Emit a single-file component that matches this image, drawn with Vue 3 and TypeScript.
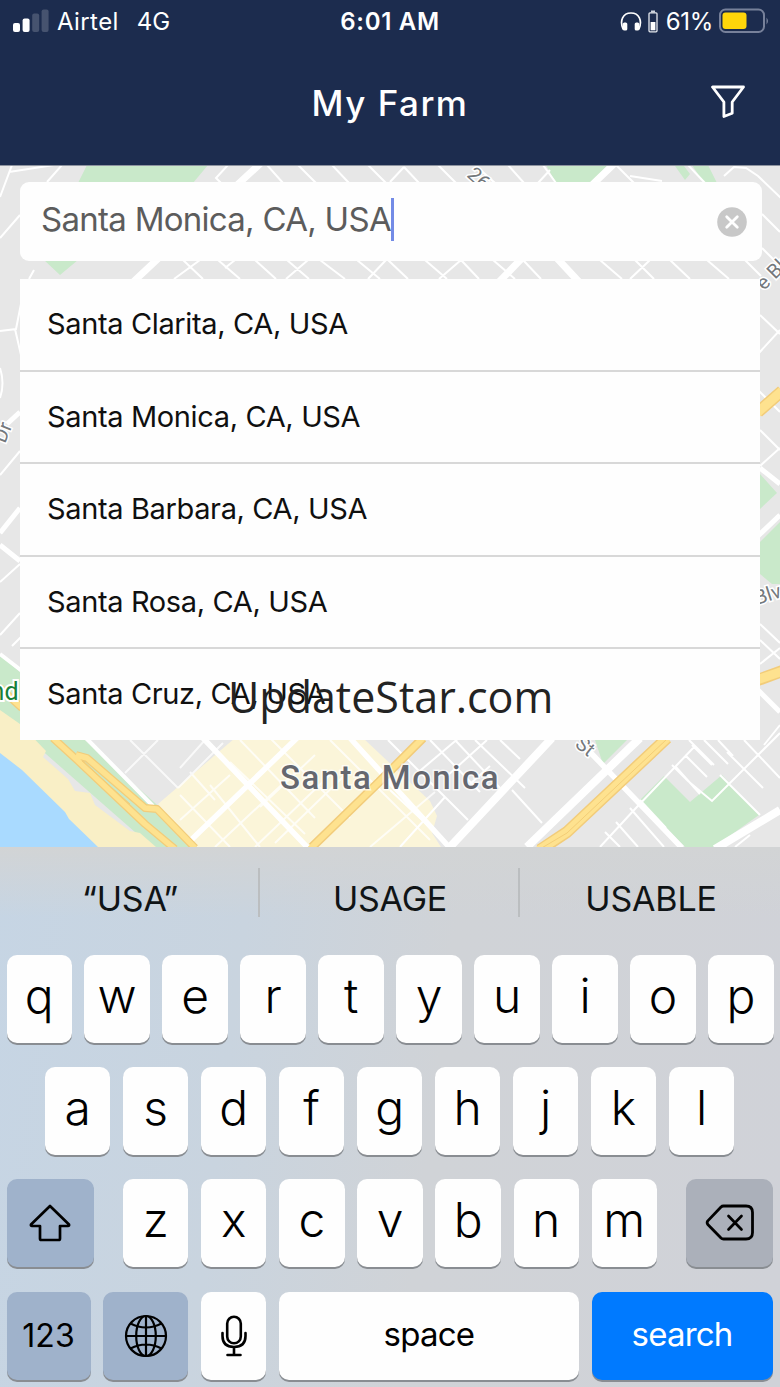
<template>
  <div class="screen">
    <header class="header">
      <div class="status-bar">
        <div class="status-left">
          <svg class="signal" width="36" height="24" viewBox="0 0 36 24">
            <rect x="0" y="14" width="7" height="9" rx="2" fill="#fff" />
            <rect x="9.6" y="9.5" width="7" height="13.5" rx="2" fill="#fff" />
            <rect x="19.2" y="4.5" width="7" height="18.5" rx="2" fill="#46536f" />
            <rect x="28.6" y="0.5" width="7" height="22.5" rx="2" fill="#46536f" />
          </svg>
          <span class="carrier">Airtel</span>
          <span class="network">4G</span>
        </div>
        <div class="clock">6:01 AM</div>
        <div class="status-right">
          <svg class="headphones" width="22" height="22" viewBox="0 0 22 22">
            <path d="M3.2 18.5C-.8 9.5 3 2 11 2s11.800 7.500 7.800 16.500" fill="none" stroke="#fff" stroke-width="1.700" />
            <rect x="2.800" y="11.500" width="4.500" height="8" rx="1.600" fill="#fff" />
            <rect x="14.700" y="11.500" width="4.500" height="8" rx="1.600" fill="#fff" />
          </svg>
          <svg class="mini-battery" width="10" height="23" viewBox="0 0 10 23">
            <rect x="3" y="0.500" width="4" height="2" fill="#cfd5df" />
            <rect x="1" y="2.800" width="8" height="19" rx="1" fill="none" stroke="#e6e9ee" stroke-width="1.300" />
            <rect x="2.600" y="12" width="4.800" height="8.300" fill="#fff" />
          </svg>
          <span class="percent">61%</span>
          <svg class="battery" width="50" height="26" viewBox="0 0 50 26">
            <rect x="1" y="1.500" width="44" height="22.500" rx="5.500" fill="none" stroke="#77819a" stroke-width="2" />
            <rect x="3.500" y="4.500" width="24" height="16.500" rx="3" fill="#ffd60a" />
            <path d="M47.500 9.500q3 3.500 0 7z" fill="#77819a" />
          </svg>
        </div>
      </div>
      <div class="title-bar">
        <h1>My Farm</h1>
        <svg class="filter" width="34" height="34" viewBox="0 0 34 34">
          <path d="M1.500 2h31L21.200 17v11.300L12.900 31.500V17z" fill="none" stroke="#fff" stroke-width="2.800" stroke-linejoin="round" />
        </svg>
      </div>
    </header>

    <main class="map-area">
      <svg class="map" width="780" height="681" viewBox="0 166 780 681">
        <rect y="165" width="780" height="682" fill="#e7e7e7" />

        <!-- parks -->
        <g fill="#c9e9ca">
          <path d="M87 165h121l-15 18H78zM44 260h34l-18 15zM546 165h65l-18 18h-37zM675 166l10 14 5-6-6-8zM692 165h16l9 18h-13z" />
          <path d="M595 740h32l-24 24zM640 800l24-24 26 26 32-27 37 40-45 32h-29zM760 474l17 19-17 16zM780 522l-20 20v32l12 10h8z" />
          <path d="M0 654l20 18v58L0 712zM30 740h55l70 63 45 44h-48z" />
        </g>

        <!-- coast -->
        <path d="M0 710l20 14 26 27-3 6 25 22 7 12 15 2 5 12 35 26 10 2 16 14H0z" fill="#f9efc6" />
        <path d="M0 753l22 17 43 42 4 7 29 28H0z" fill="#a9daff" />

        <!-- downtown -->
        <path d="M235 738l-77 66 34 43h249l-9-14 5-17-7-15-67-63z" fill="#fbf5d9" />

        <g fill="none" stroke="#fff" stroke-width="2">
          <path d="M12 165L0 197M9 172l45-7M62 165l-15 17M20 215L0 238M228 165l-12 13 6 6M267 165l16 18M298 165l18 18M332 165l17 18M368 165l18 18M404 167l-14 15M404 167l15 16M438 165l18 18M475 165l20 18M508 165l16 18M543 165l13 18M550 170l-12 13M616 165l18 18M630 176l32 5M688 165l17 18M724 176l10-9 12 1 12 8 24 23M762 214l18 18M762 248l18 18" />
          <path d="M183 260l20 19M200 260l-26 19M218 260l22 19M235 260l-10 8M255 260l21 19M308 260l-22 19M287 260l22 19M320 260l25 19M357 260l23 19M386 260l-18 19M388 260l20 19M425 260l22 19M461 260l-22 19M461 260l18 19M493 260l22 19M523 260l18 19M600 260l22 19M650 260l-20 19M635 260l19 19M670 260l20 19M707 260l22 19M745 260l16 16" />
          <path d="M34 270l-5 9M0 331l16-2 5-25M15 329l6 26M0 368q5 15 0 30M0 475l20-24M0 582l20-18M0 635l20-22M12 646l9-9M760 315l20 19M780 330l-22 24M758 390l22 22M760 430l20 20M780 448l-20 18M760 624l20 19M760 640l20 19M760 664l20-16M764 745l16-20" />
          <path d="M130 740l48 48M158 740l-33 33M178 788l45-45M205 740l-25 28M190 772l25 28M230 762l75 72M240 740l75 78M270 738l80 80M180 795l50 52M210 785l50 62M180 820l50-45M215 847l75-70M255 847l75-72M330 740l100 100M315 755l-55 52M345 775l-70 68M370 847l65-55" stroke-opacity=".75" />
          <path d="M388 740l80 80M415 775l45-38M430 740l50 52M455 740l45 48M475 740l50 48M487 740l-40 36M500 740l20 19M470 784l20-18M512 790l30 33M390 790l60 56M400 847l45-50" />
          <path d="M672 765l16 16 24 20 68-68M689 740l25 25M704 740l24 24M718 740l15 16M744 740l36 38M727 752l36 36M712 765l-20-20M600 847l35-38 60-63M605 832l15 15M616 822l22 25M630 808l34 39M640 800l26 28M685 755l22 22M675 766l25 28M720 775l40 40M735 847l15-12" />
        </g>
        <g fill="none" stroke="#fff">
          <path d="M262 162l-26 24M163 254l-32 30M524 256l-26 27M555 256l25 27M616 162l-24 23" stroke-width="7" />
          <path d="M20 508L0 533M0 545l20 16M20 412l-13 12M760 468l20 16M780 515l-22 21M758 690l22 22" stroke-width="5" />
          <path d="M0 654l22 17M85 737l68 69" stroke-width="4" />
          <path d="M203 738l106 111M297 738l-109 105M350 738l100 110M590 752l92 96" stroke-width="5.500" />
          <path d="M552 738L450 847M640 738L527 847M780 810l-65 39" stroke-width="8" />
        </g>

        <!-- highways -->
        <g fill="none" stroke="#f2cc7a" stroke-linejoin="round">
          <path d="M0 688l22 20M53 738l23 21 69 65 30 25M76 755l11 3 58 50 12 1 38 39" stroke-width="8" />
          <path d="M312 847l67-65M379 782l44-44" stroke-width="9" />
          <path d="M540 850l27-18 100-94M758 412l24-21M758 680l24-9" stroke-width="12" />
        </g>
        <g fill="none" stroke="#fee28f" stroke-linejoin="round">
          <path d="M0 688l22 20M53 738l23 21 69 65 30 25M76 755l11 3 58 50 12 1 38 39" stroke-width="5.500" />
          <path d="M310 849l69-67 46-46" stroke-width="6" />
          <path d="M538 851l29-19 100-94M757 413l25-22M757 680l26-9" stroke-width="9" />
        </g>
        <path d="M82 761l48 43M540 849l27-16 100-94" fill="none" stroke="#f3cd77" stroke-width="1" />

        <g class="road-label">
          <text transform="translate(466 176) rotate(42)">26t</text>
          <text transform="translate(574 746) rotate(38)">St</text>
          <text transform="translate(764 291) rotate(-45)">e Blv</text>
          <text transform="translate(757 605) rotate(-18)">Blve</text>
          <text transform="translate(5 444) rotate(-68)">Dr</text>
        </g>
        <text class="park-label" x="18.500" y="700" text-anchor="end">nd</text>
        <text class="city-label" x="280" y="789">Santa Monica</text>
      </svg>

      <div class="search-box">
        <span class="query">{{ query }}</span>
        <span class="caret"></span>
        <button class="clear" @click="query = ''">
          <svg width="30" height="30" viewBox="0 0 30 30">
            <circle cx="15" cy="15" r="14.800" fill="#c8c8c8" />
            <path d="M9.700 9.700l10.600 10.600M20.300 9.700L9.700 20.300" stroke="#fff" stroke-width="2.800" stroke-linecap="round" />
          </svg>
        </button>
      </div>

      <ul class="results">
        <li v-for="place in places" :key="place" @click="query = place">{{ place }}</li>
      </ul>
      <div class="watermark">UpdateStar.com</div>
    </main>

    <section class="keyboard">
      <div class="predictions">
        <span v-for="word in predictions" :key="word">{{ word }}</span>
      </div>
      <div class="key-row">
        <button v-for="k in 'qwertyuiop'" :key="k" class="key" @click="type(k)"><span>{{ k }}</span></button>
      </div>
      <div class="key-row key-row-middle">
        <button v-for="k in 'asdfghjkl'" :key="k" class="key" @click="type(k)"><span>{{ k }}</span></button>
      </div>
      <div class="key-row key-row-third">
        <button class="key key-shift">
          <svg width="42" height="38" viewBox="0 0 42 38">
            <path d="M21 2L2 20.500q-.5 1.500 1 1.500h8v12.500q0 1.500 1.500 1.500h17q1.500 0 1.500-1.500V22h8q1.500 0 1-1.500z" fill="none" stroke="#000" stroke-width="2.700" stroke-linejoin="round" />
          </svg>
        </button>
        <div class="letters">
          <button v-for="k in 'zxcvbnm'" :key="k" class="key" @click="type(k)"><span>{{ k }}</span></button>
        </div>
        <button class="key key-delete" @click="query = query.slice(0, -1)">
          <svg width="50" height="38" viewBox="0 0 50 38">
            <path d="M18.500 2H41q6.500 0 6.500 6.500v20q0 6.500-6.500 6.500H18.500q-1.500 0-2.500-1L2.800 20.500q-1.300-1.800 0-3.600L16 3q1-1 2.500-1z" fill="none" stroke="#000" stroke-width="2.800" stroke-linejoin="round" />
            <path d="M23.500 12l13 13.500M36.500 12l-13 13.500" stroke="#000" stroke-width="2.700" stroke-linecap="round" />
          </svg>
        </button>
      </div>
      <div class="key-row key-row-bottom">
        <button class="key key-numbers">123</button>
        <button class="key key-globe">
          <svg width="44" height="44" viewBox="0 0 44 44" fill="none" stroke="#000" stroke-width="2.200">
            <circle cx="22" cy="22" r="20" />
            <ellipse cx="22" cy="22" rx="9.800" ry="20" />
            <path d="M22 2v40M2 22h40M6.500 9.500q15.500 8 31 0M6.500 34.500q15.500-8 31 0" />
          </svg>
        </button>
        <button class="key key-mic">
          <svg width="26" height="42" viewBox="0 0 26 42" fill="none" stroke="#000" stroke-width="2.600" stroke-linecap="round">
            <rect x="6.200" y="1.800" width="13.600" height="26.500" rx="6.800" />
            <path d="M1.500 18v3q0 11 11.500 11t11.500-11v-3M13 32v7.500M6.500 40h13" />
          </svg>
        </button>
        <button class="key key-space" @click="type(' ')">space</button>
        <button class="key key-search">search</button>
      </div>
    </section>
  </div>
</template>

<script setup lang="ts">
import { ref } from 'vue'

const query = ref<string>('Santa Monica, CA, USA')

const places: string[] = [
  'Santa Clarita, CA, USA',
  'Santa Monica, CA, USA',
  'Santa Barbara, CA, USA',
  'Santa Rosa, CA, USA',
  'Santa Cruz, CA, USA'
]

const predictions: string[] = ['“USA”', 'USAGE', 'USABLE']

function type(char: string) {
  query.value += char
}
</script>

<style>
body {
  margin: 0;
}
</style>

<style scoped>
.screen {
  width: 780px;
  height: 1387px;
  overflow: hidden;
  font-family: Inter, "Liberation Sans", sans-serif;
}

button {
  border: 0;
  padding: 0;
  margin: 0;
  background: none;
  font-family: inherit;
  color: inherit;
}

svg {
  display: block;
  flex: none;
}

/* === Header === */
.header {
  height: 166px;
  background: #1c2c4e;
  border-bottom: 1px solid #8d939f;
  box-sizing: border-box;
  color: #fff;
}

.status-bar {
  display: grid;
  grid-template-columns: 1fr auto 1fr;
  height: 42px;
  line-height: 44px;
  font-size: 24px;
}

.status-left,
.status-right {
  display: flex;
}

.status-left {
  padding-left: 13px;
}

.signal {
  margin-top: 9px;
}

.carrier {
  margin-left: 8px;
  letter-spacing: 0.4px;
}

.network {
  margin-left: 18px;
}

.clock {
  font-weight: 600;
  letter-spacing: 0.7px;
}

.status-right {
  justify-content: flex-end;
  padding-right: 11px;
}

.headphones {
  margin-top: 11px;
}

.mini-battery {
  margin: 10px 8px 0 6px;
}

.percent {
  letter-spacing: -0.3px;
}

.battery {
  margin: 8px 0 0 6px;
}

.title-bar {
  display: grid;
  grid-template-columns: 1fr auto 1fr;
  height: 122px;
}

.title-bar h1 {
  grid-column: 2;
  margin: 0;
  font-size: 35px;
  font-weight: 450;
  line-height: 122px;
  letter-spacing: 1.5px;
}

.filter {
  justify-self: end;
  margin: 43px 35px 0 0;
}

/* === Map === */
.map-area {
  position: relative;
  height: 681px;
  overflow: hidden;
  padding: 16px 18px 0 20px;
  box-sizing: border-box;
}

.map {
  position: absolute;
  inset: 0;
}

.road-label {
  font-family: Roboto, sans-serif;
  font-size: 20px;
  fill: #74787c;
  stroke: #fff;
  stroke-width: 3px;
  paint-order: stroke;
}

.park-label {
  font: 400 25px Roboto, sans-serif;
  fill: #188038;
  stroke: #fff;
  stroke-width: 4px;
  paint-order: stroke;
}

.city-label {
  font: 500 33px Roboto, sans-serif;
  letter-spacing: 1.450px;
  fill: #65676f;
  stroke: #fff;
  stroke-opacity: 0.7;
  stroke-width: 3px;
  paint-order: stroke;
}

/* === Search === */
.search-box {
  position: relative;
  display: flex;
  height: 79px;
  padding: 0 15px 0 21px;
  background: #fefefe;
  border-radius: 9px;
}

.query {
  font-size: 33px;
  line-height: 75px;
  letter-spacing: -0.720px;
  color: #5c5c5c;
  white-space: pre;
}

.caret {
  width: 3px;
  height: 43px;
  margin-top: 16px;
  background: #738be6;
}

.clear {
  margin: 1px 0 0 auto;
}

.results {
  position: relative;
  width: 740px;
  margin: 18px 0 0;
  padding: 0;
  list-style: none;
  background: #fefefe;
}

.results li {
  box-sizing: border-box;
  height: 92.500px;
  padding-left: 27px;
  border-bottom: 2px solid #d8d8d8;
  font-size: 29px;
  line-height: 90px;
  letter-spacing: -0.360px;
  color: #101010;
}

.results li:last-child {
  height: 91px;
  border-bottom: 0;
}

.watermark {
  position: absolute;
  left: 228px;
  top: 501px;
  font-family: "Open Sans", sans-serif;
  font-size: 43px;
  line-height: 60px;
  color: #232323;
}

/* === Keyboard === */
.keyboard {
  height: 540px;
  box-sizing: border-box;
  padding: 0 6.500px;
  background:
    linear-gradient(180deg, #d2d4d5 0, rgba(210, 212, 213, 0) 70px),
    linear-gradient(97deg, #c6d5e4 0, #c9d4df 30%, #d0d3d7 55%, #d0d2d8 100%);
}

.predictions {
  display: grid;
  grid-template-columns: repeat(3, 260px);
  height: 108px;
  margin: 0 -6.500px;
  padding-top: 21px;
  box-sizing: border-box;
}

.predictions span {
  height: 49px;
  box-sizing: border-box;
  padding-left: 2px;
  border-right: 2px solid #bbbec0;
  font-size: 34px;
  line-height: 61px;
  letter-spacing: -0.200px;
  text-align: center;
  color: #101416;
}

.predictions span:last-child {
  border-right: 0;
}

.key-row {
  display: flex;
  gap: 12.700px;
  height: 88px;
  margin-bottom: 24.200px;
}

.key-row-middle {
  padding: 0 38.500px;
}

.key-row-third {
  justify-content: space-between;
  gap: 0;
}

.letters {
  display: flex;
  gap: 12.800px;
}

.key {
  display: flex;
  align-items: center;
  justify-content: center;
  flex: none;
  width: 65.300px;
  height: 88px;
  border-radius: 10px;
  background: #fefefe;
  box-shadow: 0 2px 0 #898d92;
  font-size: 48px;
  font-weight: 350;
  color: #000;
}

.key span {
  line-height: 60px;
  margin-top: -7px;
}

.key-shift,
.key-delete {
  width: 87px;
}

.key-shift,
.key-numbers,
.key-globe {
  background: #9fb2cb;
}

.key-delete {
  background: #abb0ba;
}

.key-numbers {
  width: 84px;
  font-size: 32px;
  font-weight: 400;
}

.key-globe {
  width: 85px;
}

.key-space,
.key-search {
  width: 300px;
  padding-bottom: 3px;
  box-sizing: border-box;
  font-size: 33px;
  font-weight: 400;
  letter-spacing: -0.800px;
}

.key-search {
  width: 181px;
  background: #007aff;
  color: #fff;
}
</style>
